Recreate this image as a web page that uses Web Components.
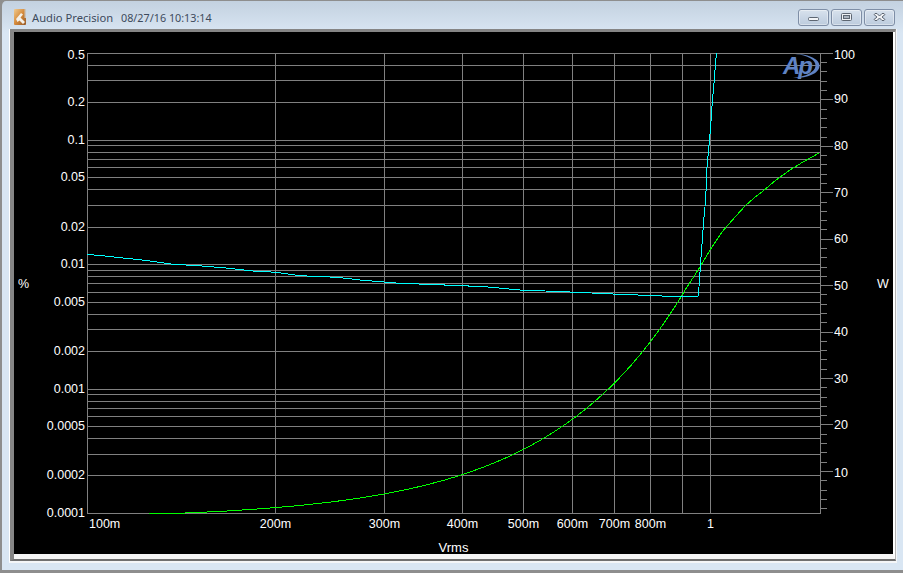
<!DOCTYPE html>
<html>
<head>
<meta charset="utf-8">
<title>Audio Precision</title>
<style>
  html, body { margin: 0; padding: 0; background: #8e8e8e; overflow: hidden; }
</style>
</head>
<body>
<ap-window>
  <svg slot="icon" width="12" height="16" viewBox="0 0 12 16">
    <defs>
      <linearGradient id="ic" x1="0" y1="0" x2="1" y2="1">
        <stop offset="0" stop-color="#f0cb90"/>
        <stop offset="0.5" stop-color="#d48a3c"/>
        <stop offset="1" stop-color="#94592a"/>
      </linearGradient>
    </defs>
    <rect width="12" height="16" rx="1" fill="url(#ic)"/>
    <path d="M2 10 L7 4 L9 5.5 L6.5 8.5 L11 13 L9 15 L5.5 11.5 L3.5 13 Z" fill="#f4f1ea"/>
    <rect x="10.5" y="0" width="1.5" height="9" fill="#c9c4bc"/>
  </svg>
  <span slot="title">Audio Precision&nbsp;&nbsp;<span style="margin-left:2px;font-size:10.8px">08/27/16 10:13:14</span></span>
  <ap-plot></ap-plot>
</ap-window>

<script>
class CaptionButton extends HTMLElement {
  constructor() {
    super();
    this.attachShadow({ mode: "open" });
    const glyphs = {
      min: `<rect x="1.5" y="4.5" width="10" height="3" rx="1" fill="#f2f4f7" stroke="#5d6672"/>`,
      max: `<rect x="1.5" y="0.5" width="10" height="7" rx="1" fill="#eef1f5" stroke="#5d6672"/>
            <rect x="3.5" y="2.5" width="6" height="3" fill="#aab4c0" stroke="#5d6672"/>`,
      close: `<path d="M2 0.5 L4 0.5 L6.5 3 L9 0.5 L11 0.5 L12 1.5 L9 4 L12 6.5 L11 7.5 L9 7.5 L6.5 5 L4 7.5 L2 7.5 L1 6.5 L4 4 L1 1.5 Z" fill="#f0f2f5" stroke="#5d6672" stroke-width="1"/>`
    };
    this.shadowRoot.innerHTML = `
    <style>
      :host {
        display: flex;
        align-items: center;
        justify-content: center;
        box-sizing: border-box;
        width: 31px;
        height: 17px;
        border: 1px solid #7e8ea6;
        border-radius: 3px;
        background: linear-gradient(#d8e2ed, #c9d6e5 50%, #bdccdd);
        box-shadow: inset 0 0 0 1px rgba(255,255,255,0.4);
      }
      svg { display: block; }
    </style>
    <svg width="13" height="9" viewBox="0 0 13 9">${glyphs[this.getAttribute("kind")]}</svg>
    `;
  }
}

class ApWindow extends HTMLElement {
  constructor() {
    super();
    this.attachShadow({ mode: "open" });
    this.shadowRoot.innerHTML = `
    <style>
      :host {
        display: flex;
        flex-direction: column;
        box-sizing: border-box;
        width: 903px;
        height: 573px;
        border-left: 2px solid #8e8e8e;
        border-top: 1px solid #8e8e8e;
        border-bottom: 3px solid #8e8e8e;
        border-top-left-radius: 6px;
        padding: 0 6px 7px 7px;
        background: linear-gradient(#c3d1e0, #d9e6f3 32px);
        font-family: "Noto Sans", "Liberation Sans", sans-serif;
        font-size: 11.2px;
      }
      header {
        display: flex;
        align-items: flex-start;
        height: 28px;
        margin-left: 5px;
        margin-right: 2px;
      }
      .icon { margin-top: 8px; height: 16px; }
      .title {
        margin: 9px 0 0 6px;
        line-height: 15px;
        color: #3d4a5c;
        white-space: nowrap;
        flex: 1;
      }
      .buttons { display: flex; gap: 2px; margin-top: 8px; }
      .frame {
        flex: 1;
        display: flex;
        border-left: 1px solid #fff;
        border-right: 1px solid #f4f6f8;
        border-bottom: 2px solid #f4f6f8;
      }
      .sunken {
        flex: 1;
        border-top: 3px solid #858585;
        border-left: 4px solid #858585;
        border-right: 1px solid #b4b4b4;
        border-bottom: 2px solid #707070;
      }
      .raised {
        border-right: 2px solid #fff;
        border-bottom: 5px solid #f6f6f6;
      }
    </style>
    <header>
      <div class="icon"><slot name="icon"></slot></div>
      <div class="title"><slot name="title"></slot></div>
      <div class="buttons">
        <ap-caption-button kind="min"></ap-caption-button>
        <ap-caption-button kind="max"></ap-caption-button>
        <ap-caption-button kind="close"></ap-caption-button>
      </div>
    </header>
    <div class="frame">
      <div class="sunken"><div class="raised"><slot></slot></div></div>
    </div>
    `;
  }
}

class ApPlot extends HTMLElement {
  constructor() {
    super();
    this.attachShadow({ mode: "open" });

    const xAt = (v) => Math.floor(87.4 + 623.5 * Math.log10(v / 0.1)) + 0.5;
    const yAt = (v) => Math.floor(513.4 - 124.4 * Math.log10(v / 0.0001)) + 0.5;
    const wattY = (w) => 53.4 + (100 - w) * 4.645;

    let grid = "";
    for (const decade of [0.0001, 0.001, 0.01, 0.1]) {
      for (let n = 1; n <= 9; n++) {
        const v = decade * n;
        if (v > 0.5001) break;
        grid += `<path d="M87 ${yAt(v)}H820"/>`;
      }
    }
    for (let n = 1; n <= 10; n++) {
      grid += `<path d="M${xAt(n / 10)} 53V514"/>`;
    }
    grid += `<path d="M87.5 53V514M820.5 53V514"/>`;

    // right axis ticks, one for every 2 W, long ones at the tens
    for (let w = 2; w <= 100; w += 2) {
      const y = Math.floor(wattY(w)) + 0.5;
      grid += `<path d="M820 ${y}H${w % 10 === 0 ? 833 : 827}"/>`;
    }

    const leftLabels = ["0.5", "0.2", "0.1", "0.05", "0.02", "0.01", "0.005", "0.002", "0.001", "0.0005", "0.0002", "0.0001"];
    let labels = leftLabels.map((t) => {
      const y = Math.floor(yAt(parseFloat(t))) + (t === "0.5" ? 6 : 4);
      return `<text x="85" y="${y}" text-anchor="end">${t}</text>`;
    }).join("");
    for (const [w, y] of [[100, 59], [90, 103], [80, 150], [70, 197], [60, 243], [50, 290], [40, 336], [30, 383], [20, 429], [10, 477]]) {
      labels += `<text x="834" y="${y}">${w}</text>`;
    }
    labels += `<text x="89" y="528">100m</text>`;
    for (const [t, v] of [["200m", 0.2], ["300m", 0.3], ["400m", 0.4], ["500m", 0.5], ["600m", 0.6], ["700m", 0.7], ["800m", 0.8], ["1", 1]]) {
      labels += `<text x="${xAt(v)}" y="528" text-anchor="middle">${t}</text>`;
    }
    labels += `<text x="18" y="288">%</text>`;
    labels += `<text x="877" y="288">W</text>`;
    labels += `<text x="453.5" y="552" text-anchor="middle" style="font-size:13px">Vrms</text>`;

    // green trace follows P = k V^2 until the amp starts to clip
    const greenPts = ["149,513.4"];
    for (let x = 165; x <= 685; x += 5) {
      const volts = 0.1 * Math.pow(10, (x - 87) / 623.5);
      const y = 53.4 + (100 - 59.2 * volts * volts) * 4.66 - 0.7;
      greenPts.push(`${x},${y.toFixed(1)}`);
    }
    const green = greenPts.join(" ") + " 700,267 710,250 722,232 728,225 745,206 754,198 763,191 776,180 790,170 803,162 819,153";
    const cyan = "87,254.3 105,256 123,258 140,259.7 157,262 173,264.3 198,265.7 223,267.7 253,271 276,272.3 300,275.7 337,277.3 363,280.3 400,283.3 437,284.7 485,286.7 520,290 563,291.7 613,294 662,296 698,296 699,286.7 700.7,261.7 701.7,248 702.7,235 703.7,220 705,206.7 706,191.7 707,166.7 709.5,140 710.7,126.7 711.7,110 712.7,98 714,83 715,70 716.5,53";

    this.shadowRoot.innerHTML = `
    <style>
      :host {
        display: block;
        width: 879px;
        height: 522px;
        background: #000;
      }
      svg { display: block; }
      .grid path { stroke: #808080; stroke-width: 1; fill: none; shape-rendering: crispEdges; }
      .trace { fill: none; stroke-width: 1; shape-rendering: crispEdges; }
      text { font: 12.5px "Liberation Sans", Arial, sans-serif; fill: #fff; }
      .logo { font: italic bold 24px "Liberation Sans", Arial, sans-serif; fill: #5f83c4; letter-spacing: -2px; }
    </style>
    <svg width="879" height="522" viewBox="14 32 879 522">
      <g class="grid">${grid}</g>
      <polyline class="trace" stroke="#00ff00" points="${green}"/>
      <polyline class="trace" stroke="#00ffff" points="${cyan}"/>
      <g>${labels}</g>
      <g>
        <text class="logo" x="783" y="74">Ap</text>
        <path d="M795 54 C810 54 820 60 819.5 66 C819 74 806 78.5 793 78 C806 76.5 815 72 815.5 66 C816 60 808 55 795 54Z" fill="#5f83c4"/>
      </g>
    </svg>
    `;
  }
}

customElements.define("ap-caption-button", CaptionButton);
customElements.define("ap-window", ApWindow);
customElements.define("ap-plot", ApPlot);
</script>
</body>
</html>
